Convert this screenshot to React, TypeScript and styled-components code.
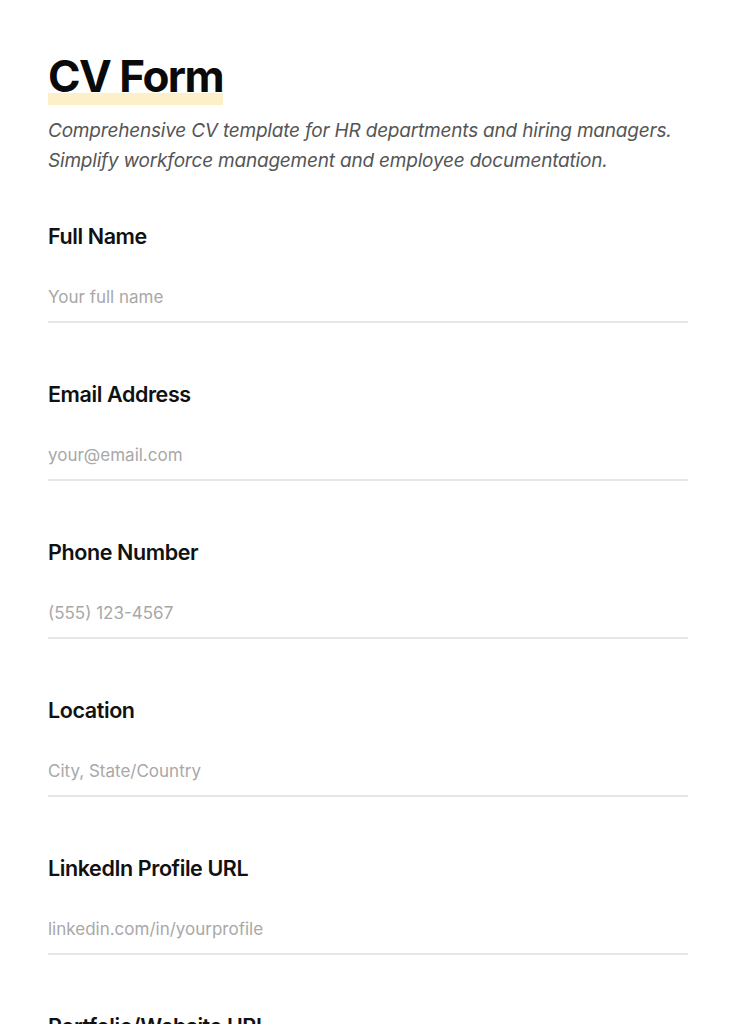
import React from "react";
import styled, { createGlobalStyle } from "styled-components";

const Global = createGlobalStyle`
  html, body { margin: 0; padding: 0; background: #ffffff; }
  body { font-family: "Inter", "Noto Sans", sans-serif; color: #111; }
  * { box-sizing: border-box; }
`;

const Page = styled.main`
  padding: 50px 48px 0 48px;
  display: flex;
  flex-direction: column;
`;

const Header = styled.header`
  display: flex;
  flex-direction: column;
  align-items: flex-start;
  gap: 11px;
  margin-bottom: 46px;
`;

const Title = styled.h1`
  margin: 0;
  padding-bottom: 3px;
  font-size: 44px;
  line-height: 52px;
  font-weight: 700;
  letter-spacing: -1.5px;
  color: #0a0a0a;
  background: linear-gradient(to bottom, transparent 43px, #fdf0c8 43px);
`;

const Subtitle = styled.p`
  margin: 0;
  font-size: 19px;
  line-height: 30px;
  font-style: italic;
  font-weight: 400;
  color: #555;
  letter-spacing: -0.2px;
`;

const Form = styled.form`
  display: flex;
  flex-direction: column;
  gap: 57px;
`;

const Field = styled.label`
  display: flex;
  flex-direction: column;
  gap: 35px;
`;

const Label = styled.span`
  font-size: 21.5px;
  line-height: 28px;
  font-weight: 600;
  letter-spacing: -0.4px;
  color: #111;
`;

const Input = styled.input`
  width: 100%;
  border: none;
  border-bottom: 2px solid #e6e6e6;
  padding: 0 0 12px 0;
  font-family: inherit;
  font-size: 17px;
  line-height: 24px;
  color: #111;
  background: transparent;
  outline: none;
  &::placeholder { color: #a8a8a8; }
`;

const fields = [
  { label: "Full Name", placeholder: "Your full name", type: "text" },
  { label: "Email Address", placeholder: "your@email.com", type: "email" },
  { label: "Phone Number", placeholder: "(555) 123-4567", type: "tel" },
  { label: "Location", placeholder: "City, State/Country", type: "text" },
  { label: "LinkedIn Profile URL", placeholder: "linkedin.com/in/yourprofile", type: "text" },
  { label: "Portfolio/Website URL", placeholder: "yourwebsite.com", type: "text" },
];

export default function App() {
  return (
    <>
      <Global />
      <Page>
        <Header>
          <Title>CV Form</Title>
          <Subtitle>
            Comprehensive CV template for HR departments and hiring managers.
            <br />
            Simplify workforce management and employee documentation.
          </Subtitle>
        </Header>
        <Form onSubmit={(e) => e.preventDefault()}>
          {fields.map((f) => (
            <Field key={f.label}>
              <Label>{f.label}</Label>
              <Input type={f.type} placeholder={f.placeholder} />
            </Field>
          ))}
        </Form>
      </Page>
    </>
  );
}
